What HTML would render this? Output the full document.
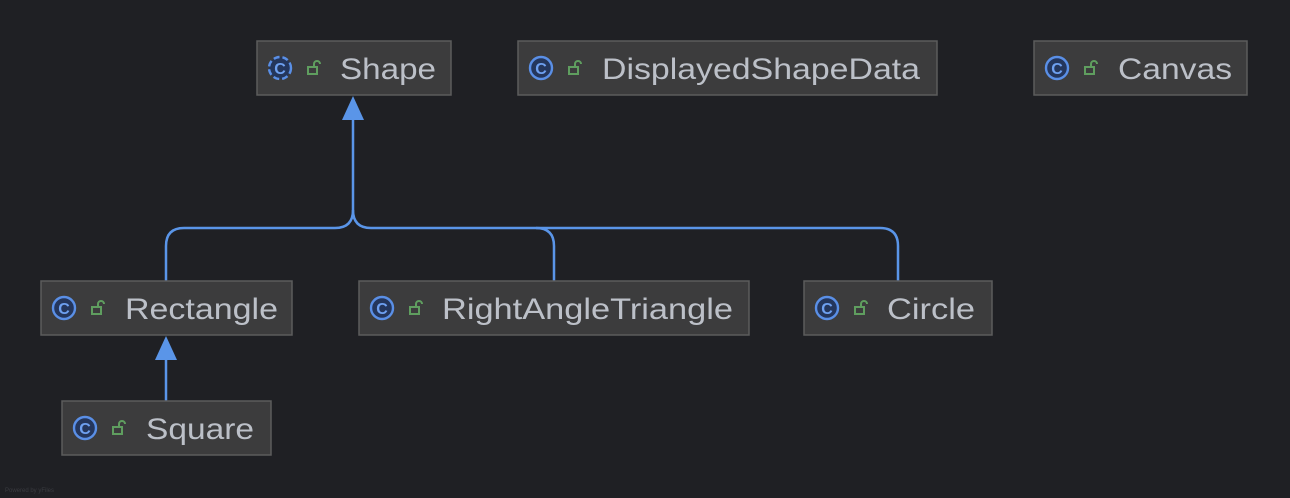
<html><body style="margin:0;background:#1f2024">
<svg width="1290" height="498" xmlns="http://www.w3.org/2000/svg" style="display:block">
<defs>
<g id="ic">
<circle cx="0" cy="0" r="11" fill="#24365c" stroke="#5a8fe6" stroke-width="2.4"/>
<text x="0" y="6" font-family="Liberation Sans,sans-serif" font-size="16" fill="#6ea0f0" text-anchor="middle" font-weight="bold">C</text>
</g>
<g id="lk">
<rect x="28" y="-1" width="9" height="7" fill="none" stroke="#5f9e5f" stroke-width="2"/>
<path d="M34 -1 v-3 a3 3 0 0 1 6 0" fill="none" stroke="#5f9e5f" stroke-width="2"/>
</g>
</defs>
<g fill="none" stroke="#5a95e8" stroke-width="2.5">
<path d="M353 118 V210 Q353 228 335 228 H184 Q166 228 166 246 V281"/>
<path d="M353 210 Q353 228 371 228 H536 Q554 228 554 246 V281"/>
<path d="M536 228 H880 Q898 228 898 246 V281"/>
<path d="M166 358 V401"/>
</g>
<path d="M353 96 L342 120 L364 120 Z" fill="#5a95e8"/>
<path d="M166 336 L155 360 L177 360 Z" fill="#5a95e8"/>
<g stroke="#5c5c5c" stroke-width="1.5" fill="#3c3c3d">
<rect x="257" y="41" width="194" height="54"/>
<rect x="518" y="41" width="419" height="54"/>
<rect x="1034" y="41" width="213" height="54"/>
<rect x="41" y="281" width="251" height="54"/>
<rect x="359" y="281" width="390" height="54"/>
<rect x="804" y="281" width="188" height="54"/>
<rect x="62" y="401" width="209" height="54"/>
</g>
<circle cx="280" cy="68" r="11" fill="#24365c" stroke="#5a8fe6" stroke-width="2.4" stroke-dasharray="6 3"/>
<text x="280" y="74" font-family="Liberation Sans,sans-serif" font-size="16" fill="#6ea0f0" text-anchor="middle" font-weight="bold">C</text>
<use href="#lk" x="280" y="68"/>
<use href="#ic" x="541" y="68"/><use href="#lk" x="541" y="68"/>
<use href="#ic" x="1057" y="68"/><use href="#lk" x="1057" y="68"/>
<use href="#ic" x="64" y="308"/><use href="#lk" x="64" y="308"/>
<use href="#ic" x="382" y="308"/><use href="#lk" x="382" y="308"/>
<use href="#ic" x="827" y="308"/><use href="#lk" x="827" y="308"/>
<use href="#ic" x="85" y="428"/><use href="#lk" x="85" y="428"/>
<g font-family="Liberation Sans,sans-serif" font-size="30" fill="#bcc0c8" lengthAdjust="spacingAndGlyphs">
<text x="340" y="79" textLength="96" lengthAdjust="spacingAndGlyphs">Shape</text>
<text x="602" y="79" textLength="318" lengthAdjust="spacingAndGlyphs">DisplayedShapeData</text>
<text x="1118" y="79" textLength="114" lengthAdjust="spacingAndGlyphs">Canvas</text>
<text x="125" y="319" textLength="153" lengthAdjust="spacingAndGlyphs">Rectangle</text>
<text x="442" y="319" textLength="291" lengthAdjust="spacingAndGlyphs">RightAngleTriangle</text>
<text x="887" y="319" textLength="88" lengthAdjust="spacingAndGlyphs">Circle</text>
<text x="146" y="439" textLength="108" lengthAdjust="spacingAndGlyphs">Square</text>
</g>
<text x="5" y="492" font-family="Liberation Sans,sans-serif" font-size="6" fill="#3a3b40">Powered by yFiles</text>
</svg>
</body></html>
